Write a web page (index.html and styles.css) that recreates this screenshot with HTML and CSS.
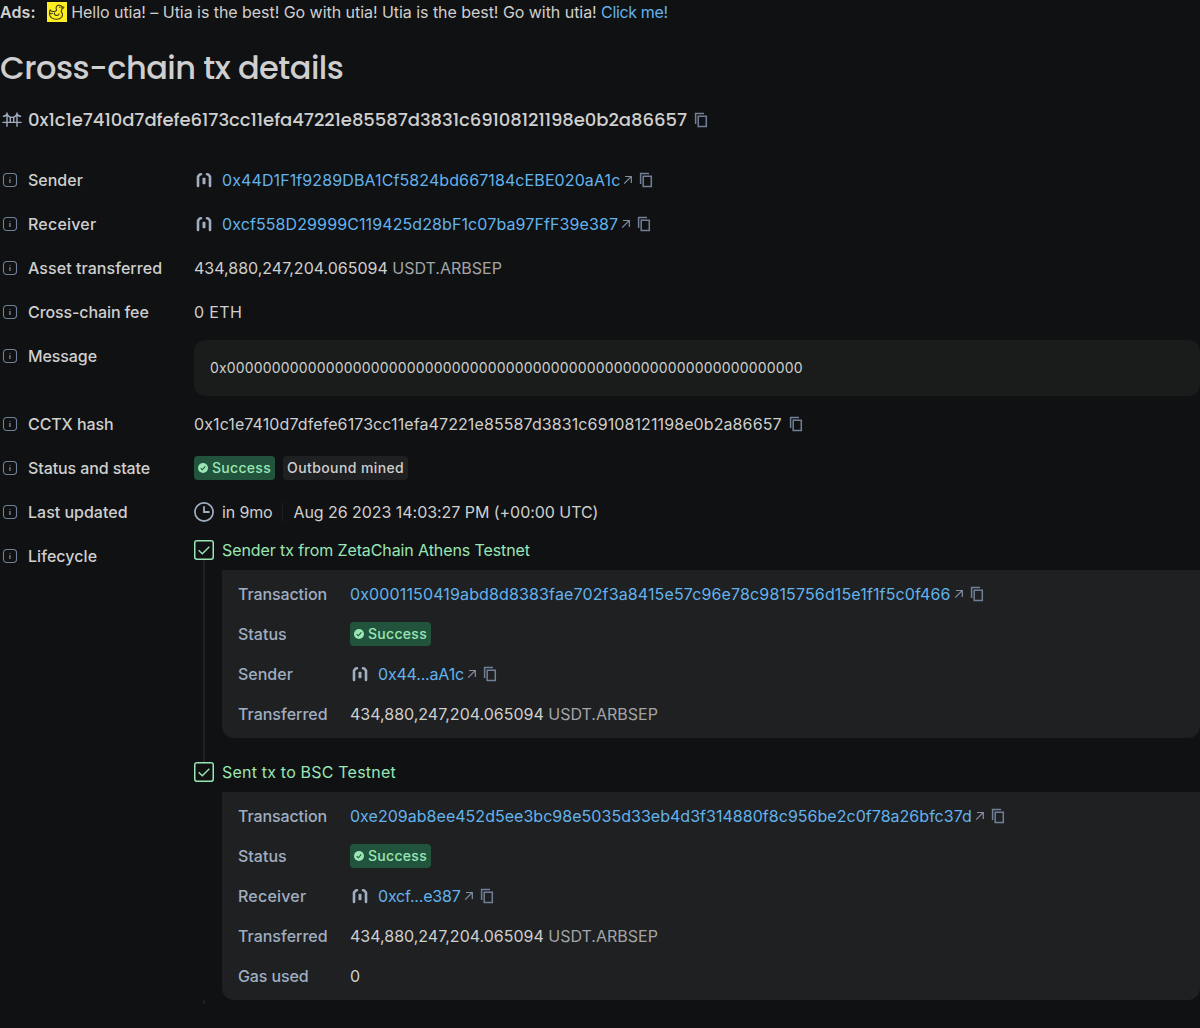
FILE: index.html
```
<!DOCTYPE html>
<html lang="en">
<head>
<meta charset="utf-8">
<title>Cross-chain tx details</title>
<link rel="stylesheet" href="styles.css">
</head>
<body>
<svg class="sprite" aria-hidden="true">
  <symbol id="info" viewBox="0 0 20 20"><rect x="3.5" y="3.5" width="13" height="13" rx="3.2" fill="none" stroke="currentColor" stroke-width="1.1"/><path d="M9.5 7h1v1h-1zM9.2 9h1.4v4H9.2z" fill="currentColor"/></symbol>
  <symbol id="copy" viewBox="0 0 20 20"><path d="M4.6 14V3.600H13M7.200 6.200h8.100v10.200H7.200z" fill="none" stroke="currentColor" stroke-width="1.5"/></symbol>
  <symbol id="arrow" viewBox="0 0 12 12"><path d="M3 2.500h6.300V8.900M9.100 2.700L2.200 9.600" fill="none" stroke="currentColor" stroke-width="1.200"/></symbol>
  <symbol id="contract" viewBox="0 0 20 20"><path d="M7 4.300L5.700 4.500 4 6.600v9.300M13 4.300l1.300.2L16 6.600v9.300" fill="none" stroke="currentColor" stroke-width="2.600" stroke-linecap="round" stroke-linejoin="round"/><rect x="8.500" y="7.800" width="3" height="6.400" rx=".8" fill="currentColor"/></symbol>
  <symbol id="done" viewBox="0 0 10 10"><circle cx="5" cy="5" r="5" fill="currentColor"/><path d="M2.7 5.2l1.6 1.6 3-3.5" fill="none" stroke="#22543d" stroke-width="1.1"/></symbol>
  <symbol id="step" viewBox="0 0 20 20"><rect x=".75" y=".75" width="18.5" height="18.5" rx="2.2" fill="none" stroke="currentColor" stroke-width="1.5"/><path d="M4.6 10.2l3.7 3.5 7-7" fill="none" stroke="currentColor" stroke-width="1.4"/></symbol>
</svg>

<div class="ads"><b>Ads:</b>
  <svg class="duck" viewBox="0 0 20 20"><rect width="20" height="20" fill="#fcee21"/><g fill="none" stroke="#3b3613" stroke-width="1.1" stroke-linecap="round" stroke-linejoin="round"><path d="M9.600 8.200C8 5.200 10 3 12.200 3.100c2.400 0 3.600 2.300 2.600 4.500-.4.900-.7 1.400-.6 2 2 2 1.600 5-.6 6.500-2.600 1.700-6.600 1.500-8.900-.2C2.500 14.200 2.300 10.500 3 7.800c1 1.200 2 1.700 3.300 1.700 1.500 0 2.700-.4 3.300-1.300"/><path d="M3.200 11.400c.8.500 1.700.5 2.500 0M7.500 11c-.8 2.500 3.800 3.600 4.600.8"/></g><path d="M14.700 4.600l2.600.3-1.500 2.300z" fill="#a8512a" stroke="#3b3613" stroke-width=".5"/><circle cx="12.800" cy="5.300" r=".7" fill="#3b3613"/></svg>
  <span>Hello utia! – Utia is the best! Go with utia! Utia is the best! Go with utia! <a>Click me!</a></span>
</div>
<h1>Cross-chain tx details</h1>
<div class="hash">
  <svg class="i20 muted" viewBox="0 0 20 20"><path d="M5 3.200v13.500M15 3.200v13.500M.4 12.400h19.200M.8 6.400c2 0 3.600-.8 4.200-2.600C6.300 8.600 13.700 8.600 15 3.800c.6 1.800 2.200 2.600 4.200 2.600M8.300 7.400v5M11.700 7.400v5" fill="none" stroke="currentColor" stroke-width="1.400"/></svg>
  <span class="hash-text">0x1c1e7410d7dfefe6173cc11efa47221e85587d3831c69108121198e0b2a86657</span>
  <svg class="i20 copy"><use href="#copy"/></svg>
</div>

<dl class="details">
  <dt><svg><use href="#info"/></svg>Sender</dt>
  <dd><svg class="i20 muted lead"><use href="#contract"/></svg><a class="address">0x44D1F1f9289DBA1Cf5824bd667184cEBE020aA1c</a><svg class="arrow"><use href="#arrow"/></svg><svg class="i20 copy"><use href="#copy"/></svg></dd>
  <dt class="loose"><svg><use href="#info"/></svg>Receiver</dt>
  <dd><svg class="i20 muted lead"><use href="#contract"/></svg><a class="address">0xcf558D29999C119425d28bF1c07ba97FfF39e387</a><svg class="arrow"><use href="#arrow"/></svg><svg class="i20 copy"><use href="#copy"/></svg></dd>
  <dt class="wide"><svg><use href="#info"/></svg>Asset transferred</dt>
  <dd><span>434,880,247,204.065094 <span class="token">USDT.ARBSEP</span></span></dd>
  <dt class="tight"><svg><use href="#info"/></svg>Cross-chain fee</dt>
  <dd class="fee">0 ETH</dd>
  <dt class="tight"><svg><use href="#info"/></svg>Message</dt>
  <dd class="message">0x0000000000000000000000000000000000000000000000000000000000000000</dd>
  <dt class="tight"><svg><use href="#info"/></svg>CCTX hash</dt>
  <dd><span class="address">0x1c1e7410d7dfefe6173cc11efa47221e85587d3831c69108121198e0b2a86657</span><svg class="i20 copy"><use href="#copy"/></svg></dd>
  <dt class="tight"><svg><use href="#info"/></svg>Status and state</dt>
  <dd class="tags"><span class="tag success"><svg><use href="#done"/></svg>Success</span><span class="tag state">Outbound mined</span></dd>
  <dt><svg><use href="#info"/></svg>Last updated</dt>
  <dd><svg class="i20 muted lead" viewBox="0 0 20 20"><circle cx="10" cy="10" r="9.100" fill="none" stroke="currentColor" stroke-width="1.700"/><path d="M10 4.200V10h5.600" fill="none" stroke="currentColor" stroke-width="1.800"/></svg><span class="ago">in 9mo</span><i class="divider"></i><span class="date">Aug 26 2023 14:03:27 PM (+00:00 UTC)</span></dd>
  <dt class="wide"><svg><use href="#info"/></svg>Lifecycle</dt>
  <dd class="lifecycle">
    <section class="stage">
      <div class="rail"><svg><use href="#step"/></svg></div>
      <div class="body">
        <h2 class="tight">Sender tx from ZetaChain Athens Testnet</h2>
        <dl class="card">
          <dt class="tight">Transaction</dt><dd><a class="tx-in">0x0001150419abd8d8383fae702f3a8415e57c96e78c9815756d15e1f1f5c0f466</a><svg class="arrow"><use href="#arrow"/></svg><svg class="i20 copy"><use href="#copy"/></svg></dd>
          <dt>Status</dt><dd><span class="tag success"><svg><use href="#done"/></svg>Success</span></dd>
          <dt>Sender</dt><dd><svg class="i20 muted lead"><use href="#contract"/></svg><a class="short">0x44...aA1c</a><svg class="arrow"><use href="#arrow"/></svg><svg class="i20 copy"><use href="#copy"/></svg></dd>
          <dt>Transferred</dt><dd><span>434,880,247,204.065094 <span class="token">USDT.ARBSEP</span></span></dd>
        </dl>
      </div>
    </section>
    <section class="stage last">
      <div class="rail"><svg><use href="#step"/></svg></div>
      <div class="body">
        <h2 class="loose">Sent tx to BSC Testnet</h2>
        <dl class="card">
          <dt class="tight">Transaction</dt><dd><a class="tx-out">0xe209ab8ee452d5ee3bc98e5035d33eb4d3f314880f8c956be2c0f78a26bfc37d</a><svg class="arrow"><use href="#arrow"/></svg><svg class="i20 copy"><use href="#copy"/></svg></dd>
          <dt>Status</dt><dd><span class="tag success"><svg><use href="#done"/></svg>Success</span></dd>
          <dt class="loose">Receiver</dt><dd><svg class="i20 muted lead"><use href="#contract"/></svg><a class="short">0xcf...e387</a><svg class="arrow"><use href="#arrow"/></svg><svg class="i20 copy"><use href="#copy"/></svg></dd>
          <dt>Transferred</dt><dd><span>434,880,247,204.065094 <span class="token">USDT.ARBSEP</span></span></dd>
          <dt class="tight">Gas used</dt><dd>0</dd>
        </dl>
      </div>
    </section>
  </dd>
</dl>
</body>
</html>
```
FILE: styles.css
```
* { box-sizing: border-box; }
body {
  margin: 0;
  background: #101112;
  color: #cfcfcf;
  font: 400 16px/24px Inter, sans-serif;
}
svg { display: block; flex: none; }
.sprite { display: none; }
a { color: #63b3ed; }
h1, h2, dl, dd { margin: 0; }

/* letter spacing */
.tight { letter-spacing: -0.1px; }
.wide { letter-spacing: 0.06px; }
.loose { letter-spacing: 0.2px; }
.address { letter-spacing: 0.1px; }
.tx-in { letter-spacing: 0.137px; }
.tx-out { letter-spacing: 0.03px; }
.short { letter-spacing: -0.18px; }
.fee { letter-spacing: 0.35px; }
.ago { letter-spacing: -0.15px; }
.date { letter-spacing: -0.05px; }

.ads { display: flex; align-items: center; height: 24px; letter-spacing: -0.045px; white-space: nowrap; }
.ads b { font-weight: 600; letter-spacing: 0.1px; }
.ads a { letter-spacing: -0.35px; }
.duck { width: 20px; height: 20px; margin: 0 4px 0 11.5px; }

h1 {
  margin-top: 24px;
  font: 500 32px/40px Poppins, Inter, sans-serif;
  letter-spacing: -0.52px;
}
.hash { display: flex; align-items: center; height: 24px; margin: 20px 0 32px 2px; }
.hash-text {
  margin-left: 6px;
  font: 500 18px/24px Poppins, Inter, sans-serif;
  letter-spacing: -0.04px;
}

.i20 { width: 20px; height: 20px; }
.muted { color: #a0aec0; }
.lead { margin-right: 8px; }
.copy { margin-left: 4px; color: #718096; }
.arrow { width: 12px; height: 12px; margin-left: 2px; color: #8390a5; }
.arrow + .copy { margin-left: 2px; }
.token { color: #a3a5a8; }

.details { display: grid; grid-template-columns: 194px 1fr; row-gap: 12px; }
.details > dt { display: flex; padding: 4px 0; font-weight: 500; }
.details > dt svg { width: 20px; height: 20px; margin: 2px 8px 0 0; color: #718096; }
.details > dd { display: flex; align-items: center; min-height: 32px; }
.details > .message {
  height: 56px;
  padding: 0 16px;
  border-radius: 12px;
  background: #1a1c1b;
  font-size: 14px;
  letter-spacing: 0.168px;
}
.details > .tags { gap: 8px; }
.tag {
  display: flex;
  align-items: center;
  height: 24px;
  padding: 0 4px;
  border-radius: 4px;
  background: #1e2022;
  font-size: 14px;
  font-weight: 500;
}
.tag svg { width: 10px; height: 10px; margin-right: 4px; }
.success { background: #22543d; color: #9ae6b4; letter-spacing: 0.3px; }
.state { letter-spacing: 0.4px; }
.divider { width: 1px; height: 20px; margin: 0 10px; background: #1c1d1f; }

.details > .lifecycle { display: block; }
.stage { display: flex; }
.rail { display: flex; flex-direction: column; align-items: center; width: 20px; margin-right: 8px; color: #9ae6b4; }
.rail svg { width: 20px; height: 20px; }
.rail::after { content: ""; flex: 1; width: 2px; background: #1e2022; }
.body { flex: 1; padding-bottom: 24px; }
.last .body { padding-bottom: 4px; }
.last .rail::after { flex: none; height: 4px; margin-top: auto; }
h2 { color: #9ae6b4; font-size: 16px; font-weight: 400; line-height: 20px; }
.card {
  display: grid;
  grid-template-columns: 112px 1fr;
  row-gap: 16px;
  margin-top: 10px;
  padding: 12px 16px;
  border-radius: 0 0 12px 12px;
  background: #1e2022;
}
.card dt { color: #a0aec0; font-weight: 500; }
.card dd { display: flex; align-items: center; height: 24px; }
```
